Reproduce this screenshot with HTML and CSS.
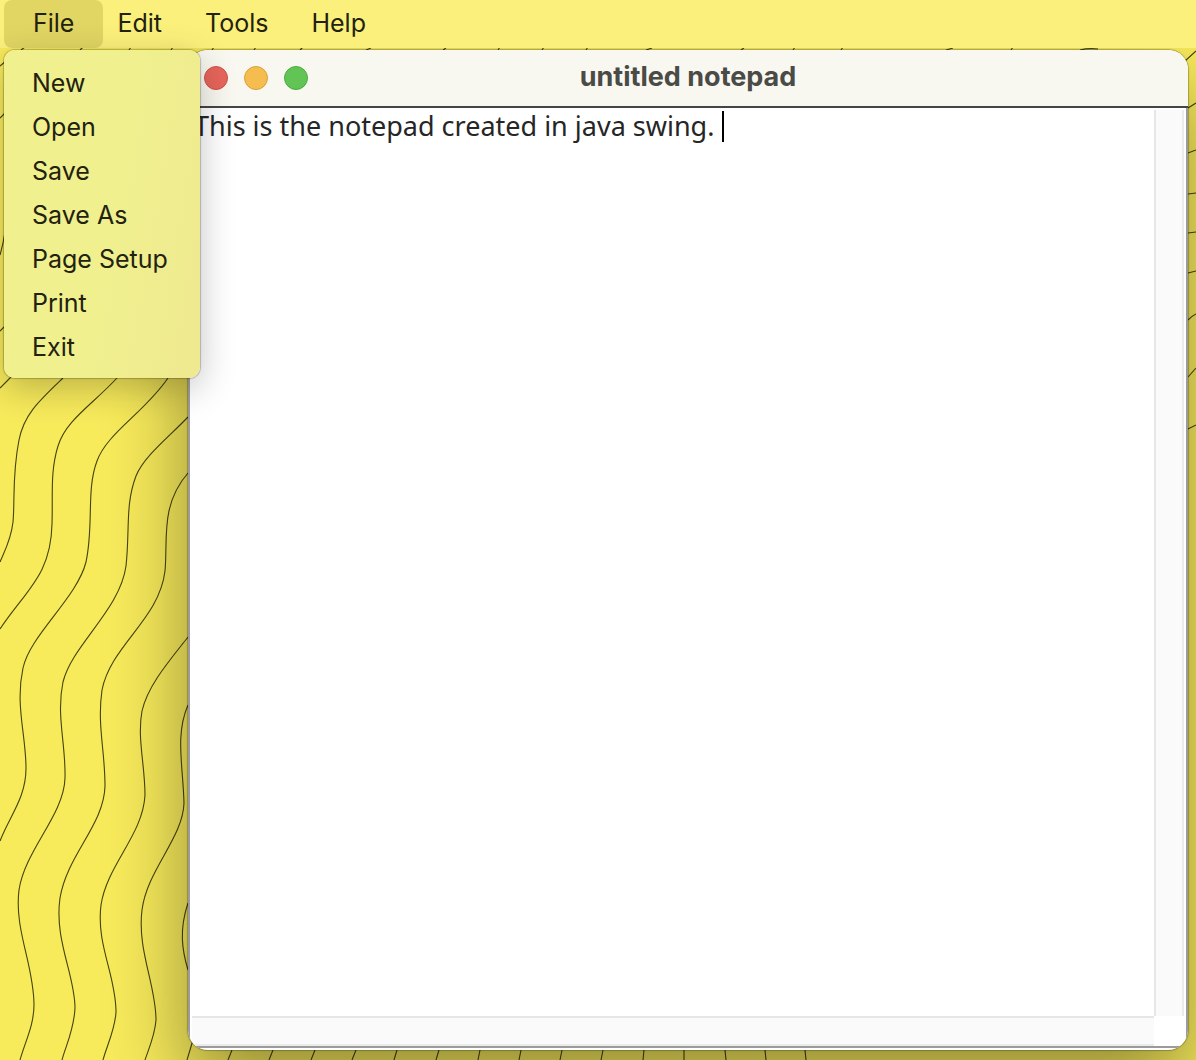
FILE: index.html
```html
<!DOCTYPE html>
<html lang="en">
<head>
<meta charset="utf-8">
<title>untitled notepad</title>
<link rel="stylesheet" href="styles.css">
</head>
<body>
<div class="desktop">
  <svg class="wallpaper" viewBox="0 0 1196 1060" preserveAspectRatio="xMinYMin slice" aria-hidden="true">
    <path d="M0 66L6 61M0 118L6 112M0 255Q3 245 5 232M0 331L6 325M0 388L12 376"/>
    <path d="M63 378C40 400 24 414 19 440C12 475 15 500 13 522C11 540 5 550 0 562"/>
    <path d="M117 378C92 405 66 420 58 446C50 472 53 495 52 524C51 575 26 590 0 629"/>
    <path d="M168 378C145 412 107 433 97 461C86 490 94 525 86 562C77 598 30 635 23 668C15 705 26 735 26 768C26 798 10 815 0 841"/>
    <path d="M188 417C170 436 144 456 136 476C125 505 130 530 126 566C120 610 72 645 63 682C56 715 66 745 65 778C64 815 25 850 19 890C14 930 34 965 34 1005C34 1025 25 1042 20 1060"/>
    <path d="M188 473C160 505 168 540 165 571C159 620 111 645 102 690C97 725 105 750 105 786C104 825 67 855 60 898C54 940 75 975 75 1008C74 1030 66 1045 62 1060"/>
    <path d="M188 637C170 660 148 685 142 711C137 738 145 765 145 795C143 835 107 865 101 905C96 945 116 975 116 1012C115 1030 107 1045 103 1060"/>
    <path d="M188 705C175 735 183 765 184 803C183 838 147 870 142 910C137 950 156 985 156 1020C155 1035 149 1048 145 1060"/>
    <path d="M188 903C179 930 182 950 188 970"/>
    <path d="M193 1040L187 1060M232 1050L228 1060M273 1050L269 1060M315 1050L311 1060M356 1050L352 1060M397 1050L394 1060M439 1050L436 1060M480 1050L478 1060M521 1050L519 1060M562 1050L560 1060M603 1050L601 1060M644 1050L643 1060M684 1050L684 1060M725 1050L726 1060M765 1050L766 1060M805 1050L806 1060"/>
    <path d="M21 50L25 47M80 50L83 47M129 50L131 47M171 50L173 47M212 50L214 47M254 50L256 47M300 50L303 47M366 50L371 48M443 50L446 48M498 50L500 47M542 50L544 47M586 50L588 47M646 50L652 48M741 50L744 48M793 50L795 47M841 50L843 47M946 50L953 48M1011 50L1013 47M1080 50Q1088 48 1098 49"/>
    <path d="M1185 61L1196 51M1188 108L1196 103M1188 153L1196 150M1188 194L1196 193M1188 233L1196 232M1188 273L1196 271M1188 320Q1192 316 1196 314M1188 377L1196 368M1188 429L1196 425"/>
  </svg>

  <nav class="menubar" aria-label="Application menu">
    <div class="menu">
      <button class="menu-title open" type="button" aria-expanded="true" aria-controls="file-menu">File</button>
      <div class="dropdown" id="file-menu" role="menu">
        <button type="button" role="menuitem">New</button>
        <button type="button" role="menuitem">Open</button>
        <button type="button" role="menuitem">Save</button>
        <button type="button" role="menuitem">Save As</button>
        <button type="button" role="menuitem">Page Setup</button>
        <button type="button" role="menuitem">Print</button>
        <button type="button" role="menuitem">Exit</button>
      </div>
    </div>
    <div class="menu"><button class="menu-title" type="button">Edit</button></div>
    <div class="menu"><button class="menu-title" type="button">Tools</button></div>
    <div class="menu"><button class="menu-title" type="button">Help</button></div>
  </nav>

  <main class="window">
    <header class="titlebar">
      <div class="controls">
        <button class="dot close" type="button" aria-label="Close"></button>
        <button class="dot minimise" type="button" aria-label="Minimise"></button>
        <button class="dot zoom" type="button" aria-label="Zoom"></button>
      </div>
      <h1>untitled notepad</h1>
    </header>
    <div class="frame">
      <div class="editor">
        <textarea aria-label="Document text" spellcheck="false">This is the notepad created in java swing. </textarea>
        <span class="caret"></span>
      </div>
      <div class="track vertical"></div>
      <div class="track horizontal"></div>
    </div>
  </main>
</div>
</body>
</html>
```
FILE: styles.css
```css
* {
  box-sizing: border-box;
}

body {
  margin: 0;
  font-family: Inter, "Liberation Sans", sans-serif;
  color: #22220f;
}

button {
  margin: 0;
  border: 0;
  background: none;
  color: inherit;
  font: inherit;
}

.desktop {
  position: relative;
  display: flex;
  flex-direction: column;
  min-height: 100vh;
  overflow: hidden;
  background: #f7ea5b;
}

.wallpaper {
  position: absolute;
  inset: 0;
  width: 100%;
  height: 100%;
  fill: none;
  stroke: #45430f;
  stroke-width: 1.1;
}

/* Menu bar */

.menubar {
  position: relative;
  z-index: 2;
  display: flex;
  height: 48px;
  padding-left: 4px;
  background: #fcf07c;
  font-size: 25px;
}

.menu {
  position: relative;
  margin-right: -15px;
}

.menu-title {
  height: 48px;
  padding: 0 29px 2px;
  border-radius: 8px;
}

.menu-title.open {
  background: #e1d663;
}

.dropdown {
  position: absolute;
  top: 50px;
  left: 0;
  display: flex;
  flex-direction: column;
  width: 196px;
  padding: 10px 0;
  border-radius: 11px;
  background: linear-gradient(100deg, #f0f08f 55%, #efea8f 90%);
  box-shadow: 0 0 1px 1px rgba(0, 0, 0, 0.22), 0 10px 36px rgba(0, 0, 0, 0.24);
}

.dropdown button {
  height: 44px;
  padding: 2px 0 0 28px;
  text-align: left;
  white-space: nowrap;
}

/* Notepad window */

.window {
  position: relative;
  z-index: 1;
  display: flex;
  flex: 1;
  flex-direction: column;
  margin: 2px 8px 10px 188px;
  padding-bottom: 2px;
  overflow: hidden;
  border-radius: 20px;
  background: #fff;
  box-shadow: 0 0 1px 1px rgba(0, 0, 0, 0.25), 0 36px 80px rgba(0, 0, 0, 0.4);
}

.titlebar {
  display: grid;
  grid-template-columns: 1fr auto 1fr;
  align-items: center;
  height: 58px;
  padding: 0 16px;
  border-bottom: 2px solid #454545;
  background: #f9f8f0;
}

.titlebar h1 {
  margin: 0;
  padding-bottom: 2px;
  color: #4a4a46;
  font-size: 27px;
  line-height: 32px;
  font-weight: 700;
}

.controls {
  display: flex;
  gap: 16px;
}

.dot {
  width: 24px;
  height: 24px;
  padding: 0;
  border: 1px solid;
  border-radius: 50%;
}

.close {
  border-color: #ce5249;
  background: #e6655b;
}

.minimise {
  border-color: #dba03c;
  background: #f5bd4f;
}

.zoom {
  border-color: #4dab42;
  background: #61c454;
}

.frame {
  display: grid;
  flex: 1;
  grid-template-columns: 1fr 30px;
  grid-template-rows: 1fr 30px;
  padding: 2px 2px 0;
  border: 2px solid #9b9a9d;
  border-top: 0;
}

.editor {
  position: relative;
  display: grid;
}

.editor textarea {
  width: 100%;
  padding: 0 2px;
  border: 0;
  outline: 0;
  resize: none;
  background: none;
  color: #262626;
  font-family: "Noto Sans", sans-serif;
  font-size: 27px;
  line-height: 32px;
}

.caret {
  position: absolute;
  top: 1px;
  left: 530px;
  width: 2px;
  height: 31px;
  background: #000;
}

.track {
  background: #fafafa;
}

.vertical {
  border-right: 2px solid #ebebeb;
  border-left: 2px solid #e6e6e6;
}

.horizontal {
  border-top: 2px solid #e6e6e6;
  border-bottom: 2px solid #ebebeb;
}
```
